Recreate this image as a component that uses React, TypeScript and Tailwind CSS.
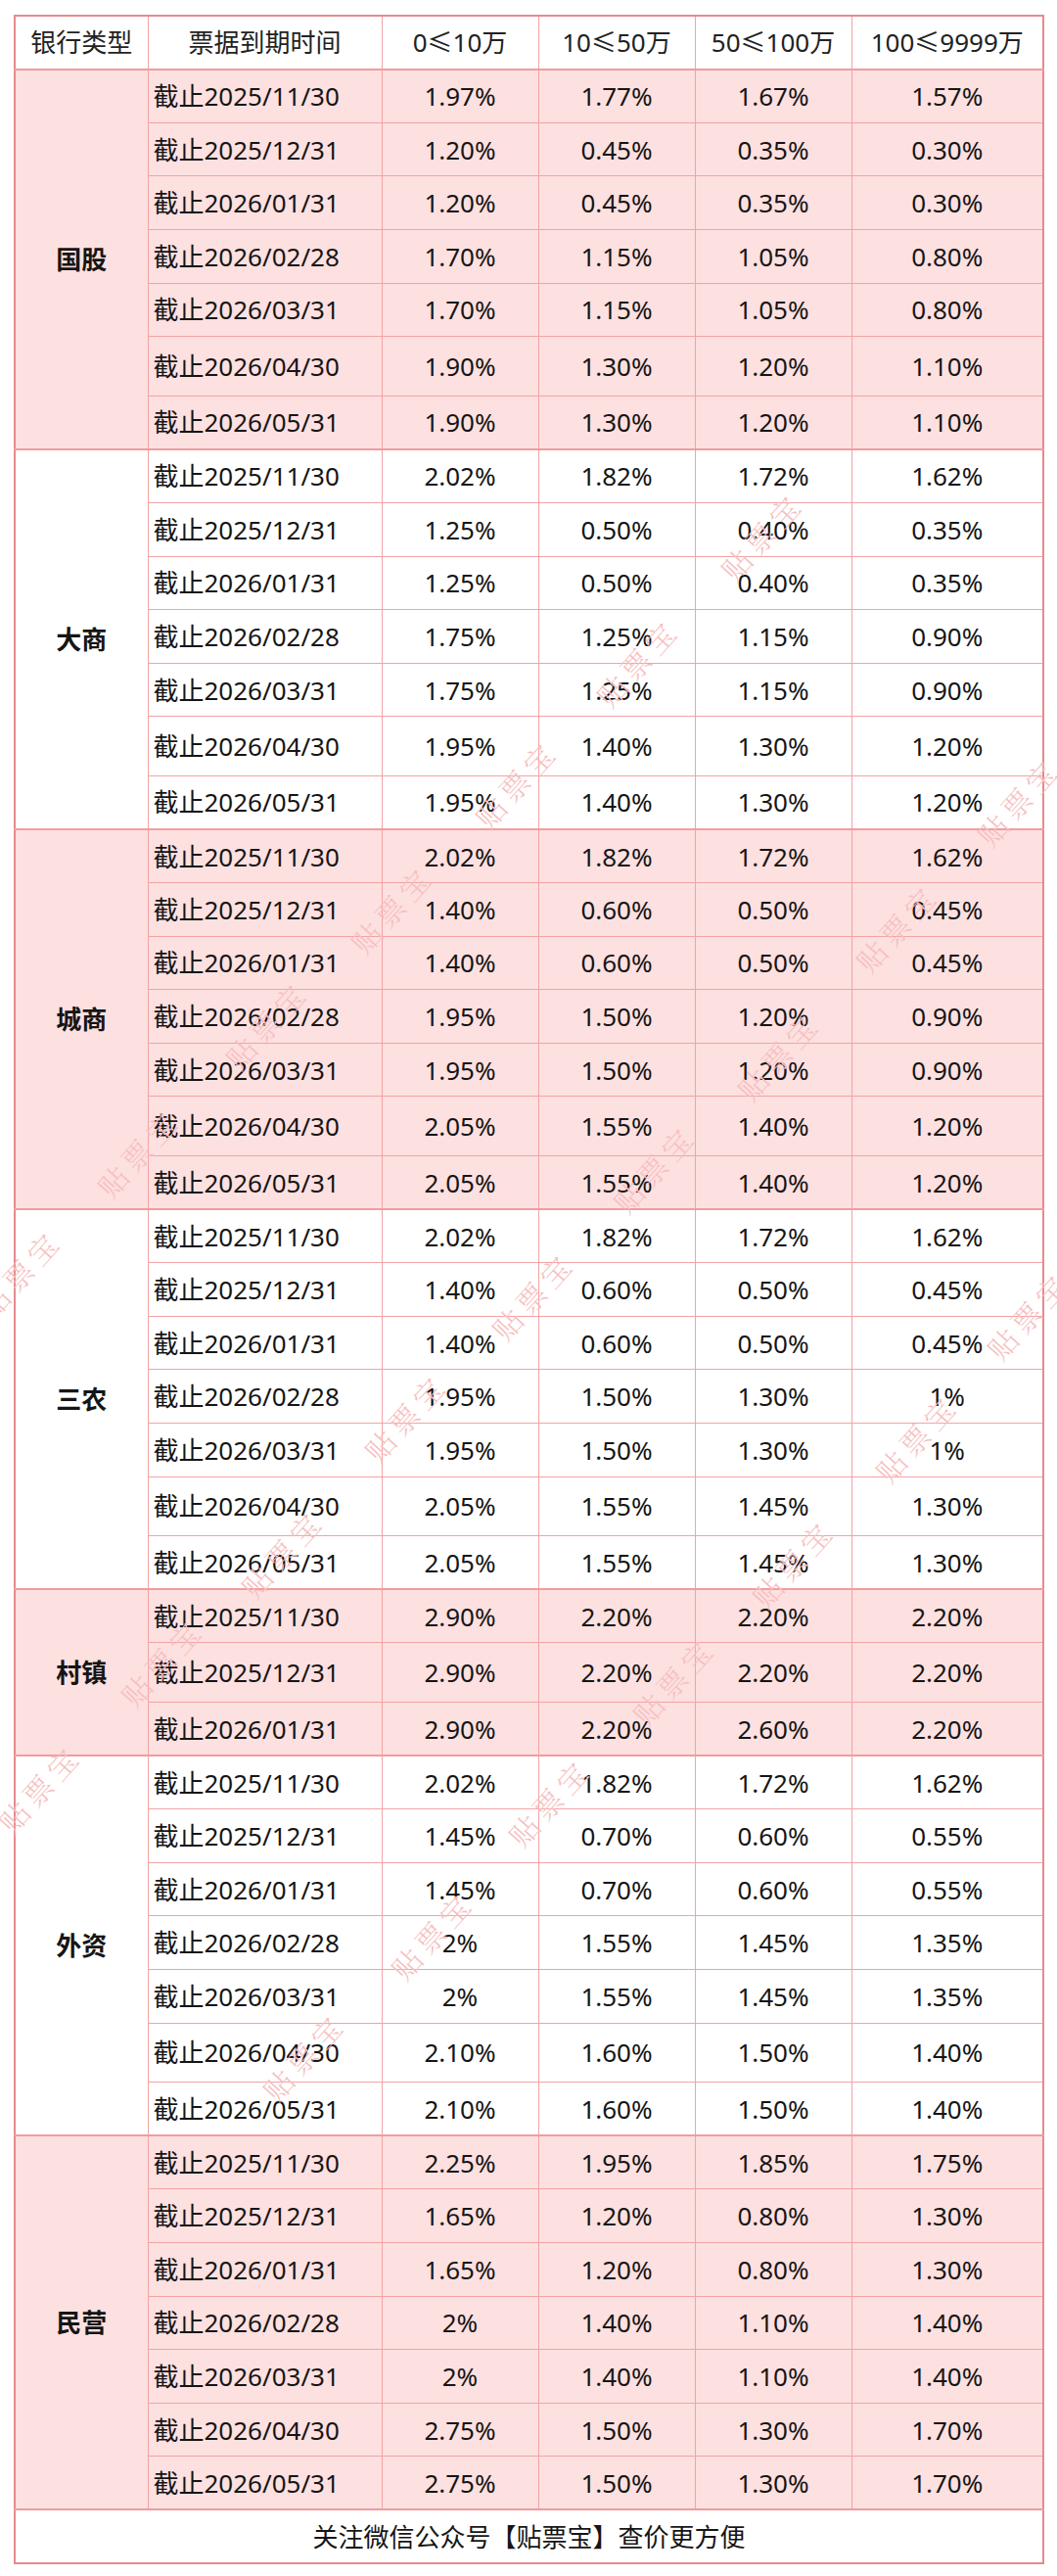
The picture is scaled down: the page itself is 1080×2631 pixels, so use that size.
import React from "react";

type Group = { name: string; pink: boolean; dates: string[]; rows: string[][]; tall: number };

const D7 = [
  "截止2025/11/30",
  "截止2025/12/31",
  "截止2026/01/31",
  "截止2026/02/28",
  "截止2026/03/31",
  "截止2026/04/30",
  "截止2026/05/31",
];

const groups: Group[] = [
  {
    name: "国股",
    pink: true,
    dates: D7,
    tall: 5,
    rows: [
      ["1.97%", "1.77%", "1.67%", "1.57%"],
      ["1.20%", "0.45%", "0.35%", "0.30%"],
      ["1.20%", "0.45%", "0.35%", "0.30%"],
      ["1.70%", "1.15%", "1.05%", "0.80%"],
      ["1.70%", "1.15%", "1.05%", "0.80%"],
      ["1.90%", "1.30%", "1.20%", "1.10%"],
      ["1.90%", "1.30%", "1.20%", "1.10%"],
    ],
  },
  {
    name: "大商",
    pink: false,
    dates: D7,
    tall: 5,
    rows: [
      ["2.02%", "1.82%", "1.72%", "1.62%"],
      ["1.25%", "0.50%", "0.40%", "0.35%"],
      ["1.25%", "0.50%", "0.40%", "0.35%"],
      ["1.75%", "1.25%", "1.15%", "0.90%"],
      ["1.75%", "1.25%", "1.15%", "0.90%"],
      ["1.95%", "1.40%", "1.30%", "1.20%"],
      ["1.95%", "1.40%", "1.30%", "1.20%"],
    ],
  },
  {
    name: "城商",
    pink: true,
    dates: D7,
    tall: 5,
    rows: [
      ["2.02%", "1.82%", "1.72%", "1.62%"],
      ["1.40%", "0.60%", "0.50%", "0.45%"],
      ["1.40%", "0.60%", "0.50%", "0.45%"],
      ["1.95%", "1.50%", "1.20%", "0.90%"],
      ["1.95%", "1.50%", "1.20%", "0.90%"],
      ["2.05%", "1.55%", "1.40%", "1.20%"],
      ["2.05%", "1.55%", "1.40%", "1.20%"],
    ],
  },
  {
    name: "三农",
    pink: false,
    dates: D7,
    tall: 5,
    rows: [
      ["2.02%", "1.82%", "1.72%", "1.62%"],
      ["1.40%", "0.60%", "0.50%", "0.45%"],
      ["1.40%", "0.60%", "0.50%", "0.45%"],
      ["1.95%", "1.50%", "1.30%", "1%"],
      ["1.95%", "1.50%", "1.30%", "1%"],
      ["2.05%", "1.55%", "1.45%", "1.30%"],
      ["2.05%", "1.55%", "1.45%", "1.30%"],
    ],
  },
  {
    name: "村镇",
    pink: true,
    dates: D7.slice(0, 3),
    tall: 1,
    rows: [
      ["2.90%", "2.20%", "2.20%", "2.20%"],
      ["2.90%", "2.20%", "2.20%", "2.20%"],
      ["2.90%", "2.20%", "2.60%", "2.20%"],
    ],
  },
  {
    name: "外资",
    pink: false,
    dates: D7,
    tall: 5,
    rows: [
      ["2.02%", "1.82%", "1.72%", "1.62%"],
      ["1.45%", "0.70%", "0.60%", "0.55%"],
      ["1.45%", "0.70%", "0.60%", "0.55%"],
      ["2%", "1.55%", "1.45%", "1.35%"],
      ["2%", "1.55%", "1.45%", "1.35%"],
      ["2.10%", "1.60%", "1.50%", "1.40%"],
      ["2.10%", "1.60%", "1.50%", "1.40%"],
    ],
  },
  {
    name: "民营",
    pink: true,
    dates: D7,
    tall: -1,
    rows: [
      ["2.25%", "1.95%", "1.85%", "1.75%"],
      ["1.65%", "1.20%", "0.80%", "1.30%"],
      ["1.65%", "1.20%", "0.80%", "1.30%"],
      ["2%", "1.40%", "1.10%", "1.40%"],
      ["2%", "1.40%", "1.10%", "1.40%"],
      ["2.75%", "1.50%", "1.30%", "1.70%"],
      ["2.75%", "1.50%", "1.30%", "1.70%"],
    ],
  },
];

const marks: [number, number][] = [
  [778, 547], [651, 676], [527, 800], [400, 928], [272, 1046], [141, 1177], [20, 1300],
  [1040, 818], [916, 947], [795, 1078], [668, 1193], [544, 1323], [414, 1447], [288, 1586], [165, 1697], [40, 1826],
  [1050, 1343], [936, 1468], [810, 1596], [688, 1716], [561, 1840], [441, 1976], [310, 2100],
];

const headers = ["银行类型", "票据到期时间", "0≤10万", "10≤50万", "50≤100万", "100≤9999万"];

export default function App() {
  return (
    <div className="relative w-[1080px] h-[2631px] bg-white pl-[14px] pt-[15px] overflow-hidden font-['Noto_Sans','Noto_Sans_CJK_SC',sans-serif] text-[26px] text-[#151515]">
      <table className="table-fixed border-collapse w-[1052px] border-2 border-[#e58a8f]">
        <colgroup>
          <col className="w-[136px]" />
          <col className="w-[239px]" />
          <col className="w-[160px]" />
          <col className="w-[160px]" />
          <col className="w-[160px]" />
          <col className="w-[196px]" />
        </colgroup>
        <thead>
          <tr className="h-[54.7px] bg-white">
            {headers.map((h) => (
              <th
                key={h}
                className="border border-[#f2a3a5] border-b-2 border-b-[#f09c9f] font-normal text-center align-middle leading-none text-[#222]"
              >
                {h}
              </th>
            ))}
          </tr>
        </thead>
        <tbody>
          {groups.map((g) =>
            g.rows.map((r, i) => (
              <tr
                key={g.name + i}
                className={`${i === g.tall ? "h-[60.6px]" : "h-[54.6px]"} ${g.pink ? "bg-[#fde0e0]" : "bg-white"}`}
              >
                {i === 0 && (
                  <td
                    rowSpan={g.rows.length}
                    className={`border border-[#f2a3a5] border-t-2 border-t-[#f09c9f] text-center align-middle font-bold leading-none ${g.pink ? "bg-[#fde0e0]" : "bg-white"}`}
                  >
                    {g.name}
                  </td>
                )}
                <td
                  className={`border border-[#f2a3a5] ${i === 0 ? "border-t-2 border-t-[#f09c9f]" : ""} pl-[5px] align-middle leading-none whitespace-nowrap`}
                >
                  {g.dates[i]}
                </td>
                {r.map((v, k) => (
                  <td
                    key={k}
                    className={`border border-[#f2a3a5] ${i === 0 ? "border-t-2 border-t-[#f09c9f]" : ""} text-center align-middle leading-none`}
                  >
                    {v}
                  </td>
                ))}
              </tr>
            ))
          )}
          <tr className="h-[55px] bg-white">
            <td
              colSpan={6}
              className="border border-[#f2a3a5] border-t-2 border-t-[#f09c9f] text-center align-middle leading-none text-[#151515]"
            >
              关注微信公众号【贴票宝】查价更方便
            </td>
          </tr>
        </tbody>
      </table>
      {marks.map(([x, y], idx) => (
        <div
          key={idx}
          className="pointer-events-none absolute -translate-x-1/2 -translate-y-1/2 -rotate-[48deg] whitespace-nowrap text-[30px] leading-none tracking-[6px] font-light text-[#f6bfc1] font-['Noto_Serif_CJK_SC','Noto_Sans_CJK_SC',serif]"
          style={{ left: x, top: y }}
        >
          贴票宝
        </div>
      ))}
    </div>
  );
}
